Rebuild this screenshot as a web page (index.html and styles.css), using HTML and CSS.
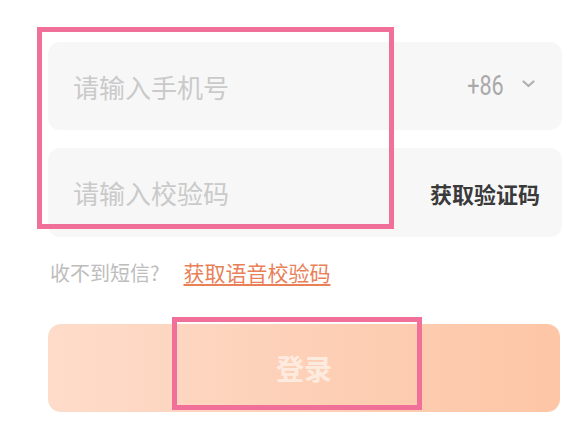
FILE: index.html
```html
<!DOCTYPE html>
<html lang="zh-CN">
<head>
<meta charset="utf-8">
<title>登录</title>
<link rel="stylesheet" href="styles.css">
</head>
<body>
<div class="page">
  <form class="form">
    <div class="field">
      <input class="input" type="tel" placeholder="请输入手机号">
      <div class="prefix">
        <span class="code">+86</span>
        <svg class="chev" width="13" height="8" viewBox="0 0 13 8"><path d="M1.5 1.5 L6.5 6 L11.5 1.5" fill="none" stroke="#b0b0b0" stroke-width="2.2" stroke-linecap="round" stroke-linejoin="round"/></svg>
      </div>
    </div>
    <div class="field">
      <input class="input" type="text" placeholder="请输入校验码">
      <span class="getcode">获取验证码</span>
    </div>
    <p class="hint">收不到短信?<a class="voice" href="#">获取语音校验码</a></p>
    <button class="submit" type="button">登录</button>
  </form>
  <div class="mark mark-fields"></div>
  <div class="mark mark-button"></div>
</div>
</body>
</html>
```
FILE: styles.css
```css
* { box-sizing: border-box; }
html, body { margin: 0; padding: 0; background: #ffffff; }
body { font-family: "Noto Sans CJK SC", "Noto Sans", sans-serif; }
.page { position: relative; width: 586px; height: 432px; padding: 42px 24px 0 48px; }
.form { display: flex; flex-direction: column; width: 514px; margin: 0; }
.field {
  display: flex; align-items: center; height: 88px; background: #f7f7f7;
  border-radius: 12px; padding: 0 22px 0 25px; margin-bottom: 18px;
}
.field + .field { height: 89px; margin-bottom: 0; }
.input {
  flex: 1; min-width: 0; border: 0; outline: 0; background: transparent; padding: 0;
  font-family: "Noto Sans CJK SC", sans-serif; font-size: 26px; color: #333;
}
.input::placeholder { color: #cacaca; }
.prefix { display: flex; align-items: center; gap: 18px; padding-right: 5px; }
.code {
  display: inline-block; font-family: Roboto, "Liberation Sans", sans-serif; font-size: 27px;
  color: #a9a9a9; transform: scaleX(0.8); transform-origin: right center; margin-left: -10px;
}
.chev { margin-top: -4px; }
.getcode { font-size: 22px; font-weight: 700; color: #3a3a3a; }
.hint { margin: 21px 0 0 2px; font-size: 20px; line-height: 28px; color: #bdbdbd; }
.voice {
  margin-left: 24px; font-size: 21px; color: #e98058; text-decoration: underline;
  text-underline-offset: 3px; text-decoration-thickness: 2px;
}
.submit {
  margin-top: 37px; height: 88px; width: 512px; border: 0; border-radius: 13px;
  background: linear-gradient(90deg, #fedcca 0%, #fdd0b7 50%, #fdc6a6 100%);
  font-family: "Noto Sans CJK SC", sans-serif; font-size: 28px; font-weight: 700;
  color: rgba(255, 248, 243, 0.7); padding: 0;
}
.mark { position: absolute; border: 5px solid #f0709a; }
.mark-fields { left: 37px; top: 27px; width: 357px; height: 202px; }
.mark-button { left: 172px; top: 317px; width: 250px; height: 93px; }
```
